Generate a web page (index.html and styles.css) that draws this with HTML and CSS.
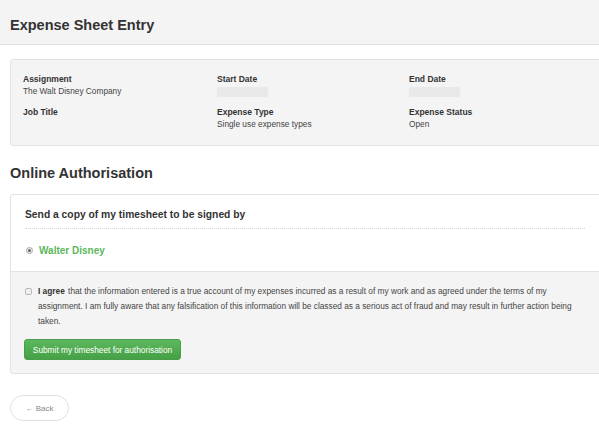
FILE: index.html
```html
<!DOCTYPE html>
<html>
<head>
<meta charset="utf-8">
<link rel="stylesheet" href="styles.css">
</head>
<body>
<header class="page-header">
  <h1 class="page-title">Expense Sheet Entry</h1>
</header>
<main class="content">
  <section class="info-panel">
    <div class="info-grid">
      <div class="info-item">
        <div class="info-label">Assignment</div>
        <div class="info-value">The Walt Disney Company</div>
      </div>
      <div class="info-item">
        <div class="info-label">Start Date</div>
        <div class="info-blur"></div>
      </div>
      <div class="info-item">
        <div class="info-label">End Date</div>
        <div class="info-blur"></div>
      </div>
      <div class="info-item">
        <div class="info-label">Job Title</div>
        <div class="info-value"></div>
      </div>
      <div class="info-item">
        <div class="info-label">Expense Type</div>
        <div class="info-value">Single use expense types</div>
      </div>
      <div class="info-item">
        <div class="info-label">Expense Status</div>
        <div class="info-value">Open</div>
      </div>
    </div>
  </section>

  <h2 class="section-title">Online Authorisation</h2>

  <section class="auth-panel">
    <div class="auth-top">
      <h3 class="auth-heading">Send a copy of my timesheet to be signed by</h3>
      <label class="radio-row">
        <span class="radio"><span class="radio-dot"></span></span>
        <span class="signer">Walter Disney</span>
      </label>
    </div>
    <div class="auth-bottom">
      <div class="agree-row">
        <span class="checkbox"></span>
        <p class="agree-text"><strong class="agree-strong">I agree</strong> that the information entered is a true account of my expenses incurred as a result of my work and as agreed under the terms of my assignment. I am fully aware that any falsification of this information will be classed as a serious act of fraud and may result in further action being taken.</p>
      </div>
      <button class="submit-btn">Submit my timesheet for authorisation</button>
    </div>
  </section>

  <button class="back-btn">&larr; Back</button>
</main>
</body>
</html>
```

FILE: styles.css
```css
* { box-sizing: border-box; }
html, body { margin: 0; padding: 0; }
body {
  font-family: "Liberation Sans", Arial, sans-serif;
  color: #333;
  background: #fff;
  width: 599px;
  overflow: hidden;
}
.page-header {
  height: 45px;
  background: #f4f4f4;
  border-bottom: 1px solid #e2e2e2;
  padding: 0 10px;
  display: flex;
  align-items: center;
}
.page-title {
  margin: 0;
  font-size: 14.5px;
  font-weight: bold;
  color: #333;
  padding-top: 6px;
}
.content {
  padding: 14px 0 0 10px;
}
.info-panel {
  width: 600px;
  background: #f4f4f4;
  border: 1px solid #e3e3e3;
  border-radius: 3px;
  padding: 14px 0 14px 12px;
}
.info-grid {
  display: grid;
  grid-template-columns: 194px 192px 1fr;
  row-gap: 9px;
}
.info-label {
  font-size: 8.5px;
  font-weight: bold;
  color: #333;
  line-height: 11px;
}
.info-value {
  font-size: 8.3px;
  color: #444;
  line-height: 13px;
  min-height: 13px;
}
.info-blur {
  width: 51px;
  height: 10px;
  margin-top: 2px;
  background: #e9e9e9;
  border-radius: 1px;
}
.section-title {
  margin: 18px 0 12px 0;
  font-size: 14.5px;
  font-weight: bold;
  color: #333;
  line-height: 18px;
}
.auth-panel {
  width: 600px;
  border: 1px solid #e3e3e3;
  border-radius: 3px;
  background: #f4f4f4;
}
.auth-top {
  background: #fff;
  padding: 14px 12px 15px 14px;
  border-bottom: 1px solid #e3e3e3;
  border-radius: 3px 3px 0 0;
}
.auth-heading {
  margin: 0 12px 0 0;
  font-size: 10.3px;
  font-weight: bold;
  color: #333;
  line-height: 12px;
  padding-bottom: 7px;
  border-bottom: 1px dotted #d4d4d4;
}
.radio-row {
  display: flex;
  align-items: center;
  margin-top: 16px;
  gap: 6px;
}
.radio {
  width: 7px;
  height: 7px;
  border: 1px solid #aaa;
  border-radius: 50%;
  background: #eee;
  display: flex;
  align-items: center;
  justify-content: center;
  margin-left: 1px;
}
.radio-dot {
  width: 3px;
  height: 3px;
  background: #666;
  border-radius: 50%;
}
.signer {
  color: #5cb85c;
  font-weight: bold;
  font-size: 10px;
}
.auth-bottom {
  padding: 12px 12px 13px 13px;
}
.agree-row {
  display: flex;
  align-items: flex-start;
  gap: 6px;
}
.checkbox {
  flex: none;
  width: 7px;
  height: 7px;
  margin-top: 4px;
  margin-left: 1px;
  border: 1px solid #b8b8b8;
  border-radius: 2px;
  background: #f0f0f0;
}
.agree-text {
  margin: 0;
  font-size: 8.3px;
  line-height: 15px;
  color: #444;
  width: 545px;
}
.agree-strong {
  color: #333;
  margin-right: 1px;
}
.submit-btn {
  margin-top: 10px;
  width: 157px;
  height: 21px;
  border: 1px solid #4a9e4a;
  border-radius: 3px;
  background: linear-gradient(#5cb85c, #46a046);
  color: #fff;
  font-family: "Liberation Sans", Arial, sans-serif;
  font-size: 8.3px;
  padding: 0;
}
.back-btn {
  margin-top: 21px;
  width: 59px;
  height: 26px;
  border: 1px solid #e0e0e0;
  border-radius: 13px;
  background: #fff;
  color: #888;
  font-family: "Liberation Sans", Arial, sans-serif;
  font-size: 8px;
  padding: 0;
}
```
